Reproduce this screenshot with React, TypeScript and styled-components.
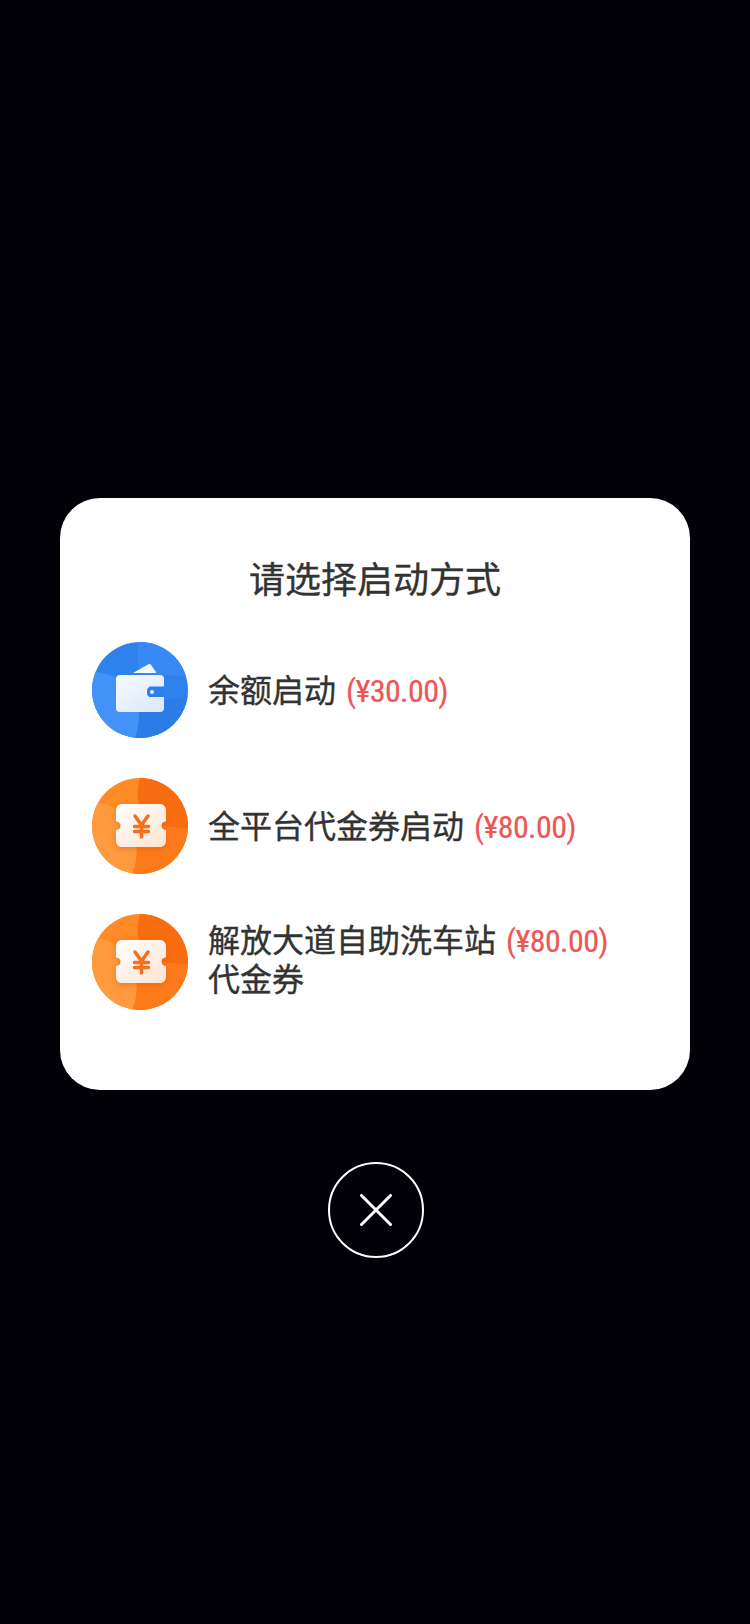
import { useId } from "react";
import styled, { createGlobalStyle } from "styled-components";

const GlobalStyle = createGlobalStyle`
  html, body {
    margin: 0;
    padding: 0;
    background: #020108;
  }
`;

const Screen = styled.div`
  width: 750px;
  height: 1624px;
  box-sizing: border-box;
  padding-top: 498px;
  display: flex;
  flex-direction: column;
  align-items: center;
  background: #020108;
  font-family: Roboto, "Noto Sans CJK SC", sans-serif;
`;

const Card = styled.div`
  width: 630px;
  height: 592px;
  box-sizing: border-box;
  padding: 58px 32px 0;
  background: #fff;
  border-radius: 40px;
`;

const Title = styled.h2`
  margin: 0 0 36px;
  height: 50px;
  line-height: 50px;
  font-size: 36px;
  font-weight: 400;
  -webkit-text-stroke: 0.35px #333;
  text-align: center;
  color: #333;
`;

const List = styled.div`
  display: flex;
  flex-direction: column;
  gap: 40px;
`;

const Row = styled.div`
  display: flex;
  align-items: center;
  gap: 20px;
`;

const Label = styled.div<{ $wrapped?: boolean }>`
  width: 420px;
  padding: ${(props) => (props.$wrapped ? "0 0 3px" : "1px 0 0")};
  font-size: 32px;
  font-weight: 400;
  -webkit-text-stroke: 0.35px #333;
  line-height: ${(props) => (props.$wrapped ? "39px" : "38px")};
  color: #333;
`;

const Price = styled.span`
  margin-left: 10px;
  color: #ee5656;
  -webkit-text-stroke: 0.2px #ee5656;
  font-stretch: condensed;
  letter-spacing: -0.6px;
`;

const CloseButton = styled.button`
  width: 96px;
  height: 96px;
  margin: 72px 0 0 2px;
  padding: 0;
  display: flex;
  align-items: center;
  justify-content: center;
  background: transparent;
  border: 2px solid #fff;
  border-radius: 50%;
`;

function WalletIcon() {
  const id = useId();
  return (
    <svg width="96" height="96" viewBox="0 0 96 96" style={{ flexShrink: 0 }}>
      <defs>
        <clipPath id={id}>
          <circle cx="48" cy="48" r="48" />
        </clipPath>
        <linearGradient id={id + "w"} x1="0" y1="0" x2="1" y2="1">
          <stop offset="0" stopColor="#f6faff" />
          <stop offset="1" stopColor="#d9e8fc" />
        </linearGradient>
      </defs>
      <g clipPath={`url(#${id})`}>
        <rect width="96" height="96" fill="#2f82ee" />
        <path d="M47 0C44 14 45 24 50 32L96 34V0Z" fill="#378af4" />
        <path d="M0 30C24 30 40 44 46 62C48 74 47 86 43 96H0Z" fill="#4292f7" />
        <path d="M43 96C47 86 48 74 46 62L96 54V96Z" fill="#2c7ce8" />
      </g>
      <path d="M41 31L56 22.5C57.5 21.8 58.5 22 59.300 23.300L64.500 31Z" fill="#f3f8ff" />
      <rect x="24" y="33" width="48" height="37" rx="4" fill={`url(#${id}w)`} />
      <path d="M72 44.500H59C56 44.500 55 47 55 50S56 55 59 55H72Z" fill="#2f7fe8" />
      <circle cx="60" cy="50" r="2" fill="#e8f2ff" />
    </svg>
  );
}

function TicketIcon() {
  const id = useId();
  return (
    <svg width="96" height="96" viewBox="0 0 96 96" style={{ flexShrink: 0 }}>
      <defs>
        <clipPath id={id}>
          <circle cx="48" cy="48" r="48" />
        </clipPath>
        <linearGradient id={id + "t"} x1="0" y1="0" x2="1" y2="1">
          <stop offset="0" stopColor="#ffffff" />
          <stop offset="1" stopColor="#fde3d2" />
        </linearGradient>
        <filter id={id + "s"} x="-20%" y="-20%" width="140%" height="150%">
          <feDropShadow dx="0" dy="2" stdDeviation="3" floodColor="#d9570a" floodOpacity="0.45" />
        </filter>
      </defs>
      <g clipPath={`url(#${id})`}>
        <rect width="96" height="96" fill="#ff8a26" />
        <path d="M48 0C44 14 45 24 50 32L70 48C80 50 90 50 96 50V0Z" fill="#f96d12" />
        <path d="M0 24C20 24 36 36 43 58C46 72 45 86 40 96H0Z" fill="#ff9a3e" />
        <path d="M40 96C45 86 46 72 43 58L50 32L70 48C80 50 90 50 96 50V96Z" fill="#fd7a1a" />
      </g>
      <path
        d="M30 26H68C71.300 26 74 28.700 74 32V43.500C71 43.500 69.500 45.500 69.500 47.700S71 52 74 52V63C74 66.300 71.300 69 68 69H30C26.700 69 24 66.300 24 63V52C27 52 28.500 50 28.500 47.700S27 43.500 24 43.500V32C24 28.700 26.700 26 30 26Z"
        fill={`url(#${id}t)`}
        filter={`url(#${id}s)`}
      />
      <path
        d="M43 38L49.500 47L56 38M42.500 48.500H56.500M42.500 53.500H56.500M49.500 47V59"
        fill="none"
        stroke="#f4701a"
        strokeWidth="3.500"
        strokeLinecap="round"
        strokeLinejoin="round"
      />
    </svg>
  );
}

function CloseIcon() {
  return (
    <svg width="32" height="32" viewBox="0 0 32 32">
      <path d="M1.500 1.500L30.500 30.500M30.500 1.500L1.500 30.500" stroke="#fff" strokeWidth="3" strokeLinecap="round" />
    </svg>
  );
}

export default function App() {
  return (
    <Screen>
      <GlobalStyle />
      <Card>
        <Title>请选择启动方式</Title>
        <List>
          <Row>
            <WalletIcon />
            <Label>
              余额启动<Price>(¥30.00)</Price>
            </Label>
          </Row>
          <Row>
            <TicketIcon />
            <Label>
              全平台代金券启动<Price>(¥80.00)</Price>
            </Label>
          </Row>
          <Row>
            <TicketIcon />
            <Label $wrapped>
              解放大道自助洗车站<Price>(¥80.00)</Price> 代金券
            </Label>
          </Row>
        </List>
      </Card>
      <CloseButton aria-label="关闭">
        <CloseIcon />
      </CloseButton>
    </Screen>
  );
}
